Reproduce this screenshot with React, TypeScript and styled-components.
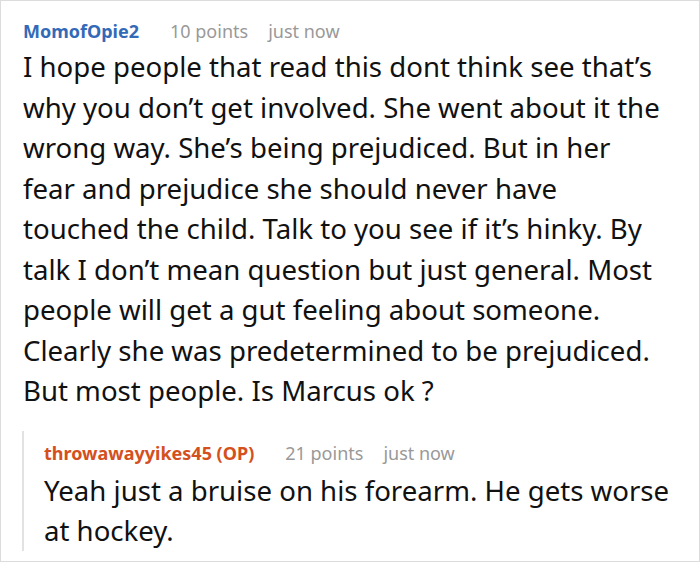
import styled, { createGlobalStyle } from 'styled-components';

const GlobalStyle = createGlobalStyle`
  body {
    margin: 0;
    background: #fff;
    font-family: "Noto Sans", "Open Sans", sans-serif;
  }
`;

const Frame = styled.div`
  width: 700px;
  height: 562px;
  box-sizing: border-box;
  border: 1px solid #dcdcdc;
  padding: 17px 22px 0 22px;
  overflow: hidden;
`;

const Comment = styled.div`
  display: flex;
  flex-direction: column;
`;

const Meta = styled.div`
  display: flex;
  align-items: baseline;
  font-size: 18px;
  line-height: 26px;
`;

const Author = styled.span<{ $op?: boolean }>`
  font-weight: 700;
  color: ${(p) => (p.$op ? '#d4501c' : '#336ab8')};
`;

const Points = styled.span`
  color: #999;
  margin-left: 31px;
`;

const Time = styled.span`
  color: #999;
  margin-left: 20px;
`;

const Body = styled.p<{ $tight?: boolean }>`
  margin: ${(p) => (p.$tight ? '4px 0 -10px 0' : '2px 0 0 0')};
  font-size: 27.6px;
  line-height: 40.5px;
  color: #111;
`;

const Line = styled.span`
  display: block;
  white-space: nowrap;
`;

const Reply = styled.div`
  margin: 20px 0 0 -1px;
  padding: 9px 0 0 20px;
  border-left: 2px solid #e2e2e2;
`;

const mainLines = [
  'I hope people that read this dont think see that’s',
  'why you don’t get involved. She went about it the',
  'wrong way. She’s being prejudiced. But in her',
  'fear and prejudice she should never have',
  'touched the child. Talk to you see if it’s hinky. By',
  'talk I don’t mean question but just general. Most',
  'people will get a gut feeling about someone.',
  'Clearly she was predetermined to be prejudiced.',
  'But most people. Is Marcus ok ?',
];

const replyLines = ['Yeah just a bruise on his forearm. He gets worse', 'at hockey.'];

export default function App() {
  return (
    <>
      <GlobalStyle />
      <Frame>
        <Comment>
          <Meta>
            <Author>MomofOpie2</Author>
            <Points>10 points</Points>
            <Time>just now</Time>
          </Meta>
          <Body>
            {mainLines.map((l, i) => (
              <Line key={i}>{l}</Line>
            ))}
          </Body>
        </Comment>
        <Reply>
          <Meta>
            <Author $op>throwawayyikes45 (OP)</Author>
            <Points>21 points</Points>
            <Time>just now</Time>
          </Meta>
          <Body $tight>
            {replyLines.map((l, i) => (
              <Line key={i}>{l}</Line>
            ))}
          </Body>
        </Reply>
      </Frame>
    </>
  );
}
